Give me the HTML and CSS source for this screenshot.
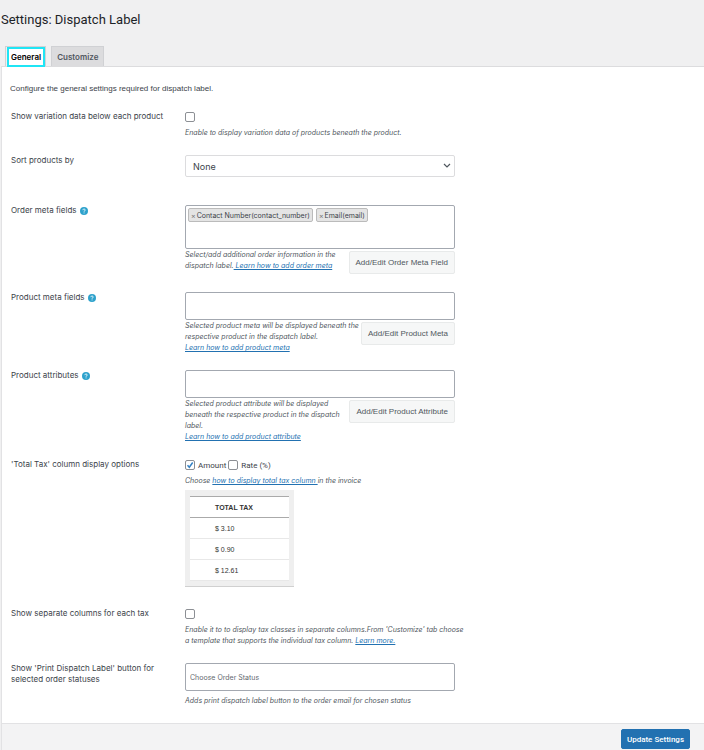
FILE: index.html
```html
<!DOCTYPE html>
<html lang="en">
<head>
    <meta charset="UTF-8">
    <meta name="viewport" content="width=device-width, initial-scale=1.0">
    <title>Settings: Dispatch Label</title>
    <link rel="stylesheet" href="styles.css">
</head>
<body>
    <h1>Settings: Dispatch Label</h1>
    <nav class="tabs">
        <a class="tab active" href="#general"><span>General</span></a>
        <a class="tab" href="#customize">Customize</a>
    </nav>
    <form class="panel" id="general">
        <div class="content">
            <p class="intro">Configure the general settings required for dispatch label.</p>

            <div class="row">
                <label class="name" for="variation">Show variation data below each product</label>
                <div class="field">
                    <div class="checks"><input type="checkbox" id="variation"></div>
                    <p class="help">Enable to display variation data of products beneath the product.</p>
                </div>
            </div>

            <div class="row sort">
                <label class="name" for="sort">Sort products by</label>
                <div class="field select">
                    <select id="sort">
                        <option>None</option>
                        <option>Name</option>
                        <option>SKU</option>
                    </select>
                    <svg class="arrow" viewBox="0 0 8 6"><path d="M1 1l3 3 3-3" fill="none" stroke="#50575e" stroke-width="1.2"/></svg>
                </div>
            </div>

            <div class="row">
                <label class="name" for="order-meta">Order meta fields
                    <svg class="tip" viewBox="0 0 16 16"><circle cx="8" cy="8" r="8" fill="#2ea2cc"/><path d="M5.7 6.3c0-3 4.7-3 4.7-.2 0 1.6-2.3 1.6-2.3 3.3M8.1 11v1.8" fill="none" stroke="#fff" stroke-width="1.8"/></svg>
                </label>
                <div class="field">
                    <div class="tags">
                        <span class="tag"><button type="button" aria-label="Remove">×</button>Contact Number(contact_number)</span>
                        <span class="tag"><button type="button" aria-label="Remove">×</button>Email(email)</span>
                        <input type="text" id="order-meta">
                    </div>
                    <div class="below">
                        <p class="help">Select/add additional order information in the<br>dispatch label.<a href="#order"> Learn how to add order meta</a></p>
                        <button type="button" class="add">Add/Edit Order Meta Field</button>
                    </div>
                </div>
            </div>

            <div class="row">
                <label class="name" for="product-meta">Product meta fields
                    <svg class="tip" viewBox="0 0 16 16"><circle cx="8" cy="8" r="8" fill="#2ea2cc"/><path d="M5.7 6.3c0-3 4.7-3 4.7-.2 0 1.6-2.3 1.6-2.3 3.3M8.1 11v1.8" fill="none" stroke="#fff" stroke-width="1.8"/></svg>
                </label>
                <div class="field">
                    <input class="box" type="text" id="product-meta">
                    <div class="below">
                        <p class="help">Selected product meta will be displayed beneath the respective product in the dispatch label.<br><a href="#meta">Learn how to add product meta</a></p>
                        <button type="button" class="add">Add/Edit Product Meta</button>
                    </div>
                </div>
            </div>

            <div class="row">
                <label class="name" for="product-attr">Product attributes
                    <svg class="tip" viewBox="0 0 16 16"><circle cx="8" cy="8" r="8" fill="#2ea2cc"/><path d="M5.7 6.3c0-3 4.7-3 4.7-.2 0 1.6-2.3 1.6-2.3 3.3M8.1 11v1.8" fill="none" stroke="#fff" stroke-width="1.8"/></svg>
                </label>
                <div class="field">
                    <input class="box" type="text" id="product-attr">
                    <div class="below">
                        <p class="help">Selected product attribute will be displayed<br>beneath the respective product in the dispatch<br>label.<br><a href="#attribute">Learn how to add product attribute</a></p>
                        <button type="button" class="add">Add/Edit Product Attribute</button>
                    </div>
                </div>
            </div>

            <div class="row">
                <span class="name">'Total Tax' column display options</span>
                <div class="field">
                    <div class="checks">
                        <input type="checkbox" id="amount" checked><label for="amount">Amount</label>
                        <input type="checkbox" id="rate"><label for="rate">Rate (%)</label>
                    </div>
                    <p class="help">Choose <a href="#tax">how to display total tax column </a>in the invoice</p>
                    <div class="preview">
                        <table>
                            <tr><th>TOTAL TAX</th></tr>
                            <tr><td>$ 3.10</td></tr>
                            <tr><td>$ 0.90</td></tr>
                            <tr><td>$ 12.61</td></tr>
                        </table>
                    </div>
                </div>
            </div>

            <div class="row">
                <label class="name" for="separate">Show separate columns for each tax</label>
                <div class="field">
                    <div class="checks"><input type="checkbox" id="separate"></div>
                    <p class="help wide">Enable it to to display tax classes in separate columns.From 'Customize' tab choose<br>a template that supports the individual tax column. <a href="#more">Learn more.</a></p>
                </div>
            </div>

            <div class="row">
                <label class="name" for="status">Show 'Print Dispatch Label' button for selected order statuses</label>
                <div class="field status">
                    <input class="box" type="text" id="status" placeholder="Choose Order Status">
                    <p class="help">Adds print dispatch label button to the order email for chosen status</p>
                </div>
            </div>
        </div>
        <div class="footer">
            <button type="submit" class="update">Update Settings</button>
        </div>
    </form>
</body>
</html>
```
FILE: styles.css
```css
* {
    box-sizing: border-box;
}
body {
    margin: 0;
    background-color: #f0f0f1;
    color: #3c434a;
    font-family: Inter, "Liberation Sans", sans-serif;
    font-size: 8px;
    line-height: 11px;
}
h1 {
    margin: 0;
    padding: 12px 1px 0;
    font-family: Roboto, sans-serif;
    font-size: 13px;
    font-weight: 400;
    line-height: 16px;
    color: #1d2327;
}
p {
    margin: 0;
}
a {
    color: #2271b1;
}
input, select, button {
    font: inherit;
    color: inherit;
}
.tabs {
    display: flex;
    gap: 5px;
    padding: 18px 5px 0;
}
.tab {
    height: 20px;
    padding: 0 5px;
    border: 1px solid #d0d1d4;
    border-bottom: 0;
    background-color: #dcdcde;
    color: #50575e;
    font-weight: 600;
    line-height: 20px;
    text-decoration: none;
}
.tab.active {
    padding: 0 0 0 1px;
    background-color: #f0f0f1;
    color: #000;
}
.tab.active span {
    display: block;
    height: 20px;
    padding: 0 2px;
    border: 2px solid #1fe5f5;
    background-color: #fff;
    line-height: 16px;
}
.panel {
    margin-left: 1px;
    border-top: 1px solid #dcdcde;
    border-left: 1px solid #e2e2e4;
    background-color: #fff;
}
.content {
    padding: 16px 8px 17px;
}
.intro {
    margin-bottom: 17px;
    font-family: "Liberation Sans", sans-serif;
}
.row {
    display: grid;
    grid-template-columns: 166px minmax(0, 270px);
    column-gap: 8px;
    margin: 0 1px 17px;
}
.row:last-child {
    margin-bottom: 0;
}
.name {
    padding-right: 10px;
}
.sort {
    min-height: 33px;
}
.tip {
    width: 8px;
    height: 8px;
    margin-left: 1px;
    vertical-align: -2px;
}
.help {
    font-size: 7px;
    font-style: italic;
    color: #50575e;
}
.wide {
    margin-right: -12px;
}
.checks {
    display: flex;
    align-items: center;
    height: 12px;
    margin-bottom: 4px;
    font-family: Roboto, sans-serif;
}
.checks input {
    appearance: none;
    width: 10px;
    height: 10px;
    margin: 0 3px 0 0;
    border: 1px solid #8c8f94;
    border-radius: 2px;
    background-color: #fff;
}
.checks input:checked {
    background-image: url("data:image/svg+xml,%3Csvg xmlns='http://www.w3.org/2000/svg' viewBox='0 0 8 8'%3E%3Cpath d='M1.5 4.2l1.8 2L6.7 1.5' fill='none' stroke='%233582c4' stroke-width='1.5'/%3E%3C/svg%3E");
}
.checks label {
    margin-right: 2px;
}
.select {
    position: relative;
}
.select select {
    appearance: none;
    display: block;
    width: 100%;
    height: 22px;
    padding: 0 7px;
    border: 1px solid #dcdcde;
    border-radius: 2px;
    background-color: #fff;
    font-size: 9px;
}
.arrow {
    position: absolute;
    top: 8px;
    right: 4px;
    width: 8px;
    height: 6px;
}
.tags, .box {
    display: block;
    width: 100%;
    height: 28px;
    border: 1px solid #a3a8b0;
    border-radius: 2px;
    background-color: #fff;
}
.box {
    padding: 0 4px;
    font-size: 7px;
}
.box::placeholder {
    color: #646970;
}
.tags {
    display: flex;
    align-items: flex-start;
    gap: 3px;
    height: 44px;
    padding: 2px;
}
.tag {
    display: flex;
    flex: none;
    align-items: center;
    height: 14px;
    padding: 0 2px;
    border: 1px solid #bbb;
    border-radius: 2px;
    background-color: #e4e4e4;
    font-size: 7px;
}
.tag button {
    padding: 0 1px 0 0;
    border: 0;
    background: none;
    color: #777;
}
.tags input {
    flex: 1;
    min-width: 0;
    padding: 0;
    border: 0;
    outline: 0;
}
.below {
    display: flex;
    justify-content: space-between;
    align-items: flex-start;
}
.add {
    flex: none;
    height: 23px;
    margin: 2px 0 1px;
    padding: 0 6px;
    border: 1px solid #e8eaea;
    border-radius: 2px;
    background-color: #f6f7f7;
    color: #50575e;
    font-family: "Liberation Sans", sans-serif;
}
.preview {
    width: 109px;
    margin: 4px 0;
    padding: 6px 5px 5px;
    border-bottom: 1px solid #d0d0d0;
    background-color: #efefef;
}
.preview table {
    width: 100%;
    border-collapse: collapse;
    border-top: 1px solid #aaa;
    background-color: #fff;
    color: #333;
    font-family: "Liberation Sans", sans-serif;
    font-size: 7px;
}
.preview th, .preview td {
    height: 21px;
    padding: 0 0 0 25px;
    border-bottom: 1px solid #e8e8e8;
    font-weight: 400;
    text-align: left;
}
.preview th {
    border-bottom-color: #aaa;
    font-weight: 700;
}
.status .help {
    margin-top: 4px;
}
.footer {
    display: flex;
    justify-content: flex-end;
    padding: 5px 14px 1px;
    border-top: 1px solid #e2e2e4;
    background-color: #f3f3f4;
}
.update {
    height: 20px;
    padding: 0 5px;
    border: 1px solid #2271b1;
    border-radius: 2px;
    background-color: #2271b1;
    color: #fff;
    font-family: Roboto, sans-serif;
    font-weight: 500;
}
```
